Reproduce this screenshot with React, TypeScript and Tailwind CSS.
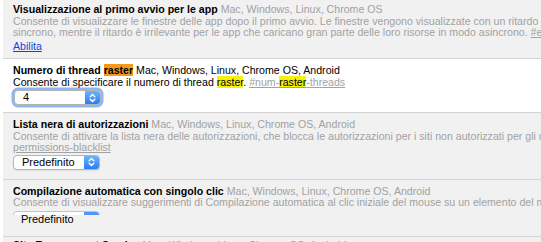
import type { ReactNode } from 'react'

function Chevrons() {
  return (
    <svg width="7" height="10" viewBox="0 0 7 10" fill="none" stroke="white" strokeWidth="1.4" strokeLinecap="round" strokeLinejoin="round">
      <path d="M1.2 3.8 L3.5 1.5 L5.8 3.8" />
      <path d="M1.2 6.2 L3.5 8.5 L5.8 6.2" />
    </svg>
  )
}

function MacSelect({ value, focused }: { value: string; focused?: boolean }) {
  return (
    <div
      className={`flex h-[15px] w-[87px] items-stretch rounded-[4px] border border-[#b5b5b5] bg-white ${
        focused ? 'ring-[2.5px] ring-[#8db6f3]' : 'shadow-[0_1px_1px_rgba(0,0,0,0.08)]'
      }`}
    >
      <span className="flex-1 pl-[8px] text-[11px] leading-[13px] text-black">{value}</span>
      <span className="flex w-[15px] items-center justify-center rounded-r-[3px] bg-gradient-to-b from-[#6cb3fa] to-[#2a7cf4]">
        <Chevrons />
      </span>
    </div>
  )
}

function Row({ white, className, children }: { white?: boolean; className: string; children: ReactNode }) {
  return (
    <div className={`border-b border-[#d3d3d3] px-[10px] ${white ? 'bg-white' : 'bg-[#f1f1f1]'} ${className}`}>
      {children}
    </div>
  )
}

function Line({ children, className = '' }: { children: ReactNode; className?: string }) {
  return <div className={`whitespace-nowrap leading-[11.5px] ${className}`}>{children}</div>
}

function Title({ children }: { children: ReactNode }) {
  return <b className="text-black">{children}</b>
}

export default function App() {
  return (
    <div className="h-[242px] w-[541px] overflow-hidden bg-white pl-[3px] font-['Liberation_Sans',Arial,sans-serif] text-[10.6px]">
      <Row className="pt-[4px] pb-[6px] text-[#a2a2a2]">
        <Line>
          <Title>Visualizzazione al primo avvio per le app</Title> Mac, Windows, Linux, Chrome OS
        </Line>
        <Line>
          Consente di visualizzare le finestre delle app dopo il primo avvio. Le finestre vengono visualizzate con un ritardo
        </Line>
        <Line>
          sincrono, mentre il ritardo è irrilevante per le app che caricano gran parte delle loro risorse in modo asincrono.{' '}
          <span className="underline">#enable-app-window-first-show</span>
        </Line>
        <Line className="mt-[2px]">
          <span className="text-[#1a3edb] underline">Abilita</span>
        </Line>
      </Row>

      <Row white className="pt-[6px] pb-[7px] text-black">
        <Line>
          <Title>
            Numero di thread <span className="bg-[#f59b1b]">raster</span>
          </Title>{' '}
          Mac, Windows, Linux, Chrome OS, Android
        </Line>
        <Line>
          Consente di specificare il numero di thread <span className="bg-[#f7f20c]">raster</span>.{' '}
          <span className="text-[#a2a2a2] underline">
            #num-<span className="bg-[#f7f20c] text-black">raster</span>-threads
          </span>
        </Line>
        <div className="mt-[2px] pl-[1px]">
          <MacSelect value="4" focused />
        </div>
      </Row>

      <Row className="pt-[6px] pb-[9px] text-[#a2a2a2]">
        <Line>
          <Title>Lista nera di autorizzazioni</Title> Mac, Windows, Linux, Chrome OS, Android
        </Line>
        <Line>
          Consente di attivare la lista nera delle autorizzazioni, che blocca le autorizzazioni per i siti non autorizzati per gli utenti.{' '}
          <span className="underline">#</span>
        </Line>
        <Line>
          <span className="underline">permissions-blacklist</span>
        </Line>
        <div className="mt-[1px]">
          <MacSelect value="Predefinito" />
        </div>
      </Row>

      <Row className="pt-[6px] pb-[9px] text-[#a2a2a2]">
        <Line>
          <Title>Compilazione automatica con singolo clic</Title> Mac, Windows, Linux, Chrome OS, Android
        </Line>
        <Line>
          Consente di visualizzare suggerimenti di Compilazione automatica al clic iniziale del mouse su un elemento del modulo.
        </Line>
        <div className="relative mt-[2px] h-[16px] w-[87px]">
          <div className="absolute inset-x-0 top-0 h-[4px] overflow-hidden">
            <div className="flex h-[15px] w-[87px] rounded-[4px] border border-[#c4c4c4] bg-white">
              <span className="flex-1" />
              <span className="w-[15px] rounded-r-[3px] bg-[#4f97f7]" />
            </div>
          </div>
          <span className="absolute left-[8px] top-[2px] text-[11px] leading-[13px] text-black">Predefinito</span>
        </div>
      </Row>

      <Row className="pt-[3px] text-[#a2a2a2]">
        <Line>
          <Title>Site Engagement Service</Title> Mac, Windows, Linux, Chrome OS, Android
        </Line>
      </Row>
    </div>
  )
}
